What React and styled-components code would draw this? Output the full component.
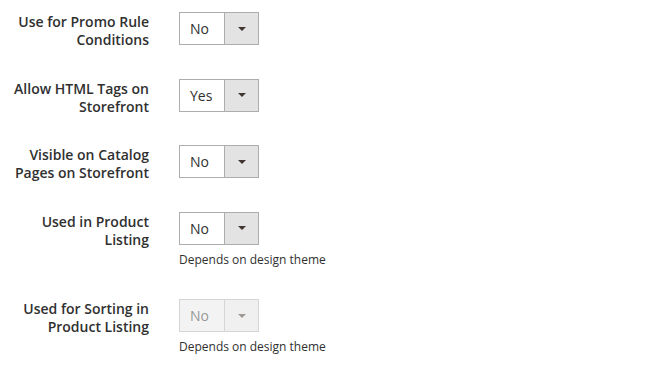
import React from 'react';
import styled, { createGlobalStyle } from 'styled-components';

const GlobalStyle = createGlobalStyle`
  body {
    margin: 0;
    background: #ffffff;
    font-family: "Open Sans", "Liberation Sans", sans-serif;
    color: #303030;
  }
`;

const fields = [
  { id: 'promo', label: 'Use for Promo Rule Conditions', value: 'No' },
  { id: 'html', label: 'Allow HTML Tags on Storefront', value: 'Yes' },
  { id: 'visible', label: 'Visible on Catalog Pages on Storefront', value: 'No' },
  { id: 'listing', label: 'Used in Product Listing', value: 'No', note: 'Depends on design theme' },
  { id: 'sorting', label: 'Used for Sorting in Product Listing', value: 'No', note: 'Depends on design theme', disabled: true },
];

const App = () => (
  <>
    <GlobalStyle />
    <Form>
      {fields.map((field) => (
        <Field key={field.id}>
          <Label>{field.label}</Label>
          <Control>
            <Select $disabled={field.disabled}>
              <SelectValue>{field.value}</SelectValue>
              <SelectArrow>
                <Caret />
              </SelectArrow>
            </Select>
            {field.note && <Note>{field.note}</Note>}
          </Control>
        </Field>
      ))}
    </Form>
  </>
);

const Form = styled.div`
  display: flex;
  flex-direction: column;
  gap: 29.5px;
  padding-top: 12px;
`;

const Field = styled.div`
  display: grid;
  grid-template-columns: 149px auto;
  column-gap: 30px;
  align-items: start;
`;

const Label = styled.div`
  padding-top: 1px;
  font-size: 14px;
  font-weight: 600;
  line-height: 18px;
  text-align: right;
  color: #303030;
`;

const Control = styled.div`
  display: flex;
  flex-direction: column;
  align-items: flex-start;
`;

const Select = styled.div`
  display: flex;
  width: 80px;
  height: 33px;
  box-sizing: border-box;
  border: 1px solid #adadad;
  background: ${(p) => (p.$disabled ? '#e9e9e9' : '#ffffff')};
  opacity: ${(p) => (p.$disabled ? 0.5 : 1)};
`;

const SelectValue = styled.div`
  flex: 1;
  padding-left: 10px;
  font-size: 14px;
  line-height: 31px;
  color: #303030;
`;

const SelectArrow = styled.div`
  width: 33px;
  display: flex;
  align-items: center;
  justify-content: center;
  border-left: 1px solid #adadad;
  background: #e3e3e3;
`;

const Caret = styled.span`
  width: 0;
  height: 0;
  border-left: 4px solid transparent;
  border-right: 4px solid transparent;
  border-top: 4px solid #41362f;
`;

const Note = styled.div`
  margin-top: 7px;
  padding-bottom: 2px;
  font-size: 12px;
  line-height: 16px;
  color: #303030;
`;

export default App;
